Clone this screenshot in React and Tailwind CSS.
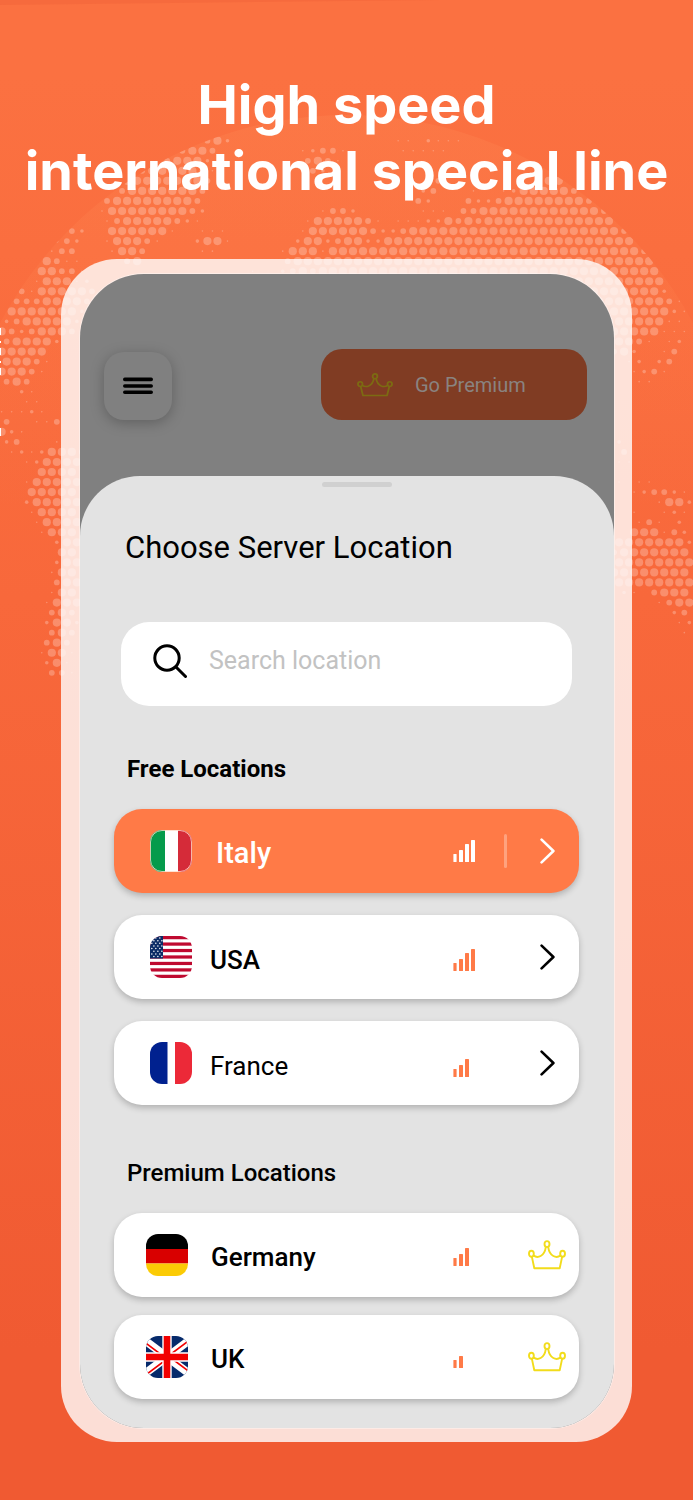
import React, { useState } from 'react';

// Halftone world map. Each row is a list of "column:sizes" runs, sizes are 1-4.
const MAP_ROWS = [
  '20:342 39:11 42:2111',
  '18:3443 30:12331 40:11111',
  '16:34442 30:3431',
  '14:34444431 30:232',
  '12:444444443 43:3 53:3442',
  '12:344444443 42:23 47:1 50:12444443',
  '10:3444444443 41:32 46:3223444444443',
  '10:14444444432 32:1332 42:111 46:334444444444443',
  '10:1344444321 30:14444431 39:1112243434444444444444',
  '7:32 11:4444441 20:111 30:144444432234444444444444444444443',
  '5:232 10:144431 19:2441 29:2442344224444444444444444444444444',
  '5:133 11:1443 20:11 28:1444144444444444444444444444444444443',
  '4:4311 12:34 28:3444444444444444444444444444444444444',
  '4:44331 25:1 28:23434444444444444444444444444444444444',
  '3:144412 56:4444444444',
  '2:31444443 57:4444444442',
  '1:33344443 58:4444444431',
  '1:44444442 60:444444421',
  '0:23444442 60:44444411',
  '0:43234443 60:444444111',
  '0:344442 61:4431 66:12',
  '0:44444 61:342 66:13',
  '0:44431 62:12 65:23',
  '0:44431 63:1231',
  '0:343 63:11',
  '2:21',
  '2:11',
  '0:11121',
  '0:3 3:113',
  '0:421',
  '0:23 5:1 61:2',
  '1:12124443 62:3',
  '2:124444 61:11',
  '4:4444',
  '2:144444 61:1 63:11',
  '3:44444 63:123321',
  '2:244444 65:1442',
  '3:14444 61:1 63:1 66:121',
  '3:14444 63:131 67:2',
  '4:1444 63:444132',
  '5:244 61:44444442',
  '6:44 61:34444444',
  '5:244 61:44444444',
  '5:144 61:44444444',
  '5:344 61:44444444',
  '5:144 62:21 65:3444',
  '4:1444 65:1344',
  '5:343 67:23',
  '4:2442 67:12',
  '5:343 68:1',
  '4:343',
  '4:1441',
  '4:241',
  '5:331',
];

const DOT_RADIUS = [0, 0.8, 1.8, 2.9, 4.1];
const PITCH = 10.04;

const dots = MAP_ROWS.flatMap((row, r) =>
  row.split(' ').flatMap(run => {
    const [start, sizes] = run.split(':');
    return [...sizes].map((size, i) => ({
      x: (r % 2 ? 1.6 : 6.6) + (Number(start) + i) * PITCH,
      y: 140.7 + r * PITCH,
      radius: DOT_RADIUS[size]
    }));
  })
);

const WorldMap = () => (
  <svg viewBox="0 0 693 720" className="absolute inset-x-0 top-0 w-full" aria-hidden="true">
    <defs>
      <clipPath id="globe">
        <circle cx="346.5" cy="507.6" r="392.6" />
      </clipPath>
      <linearGradient id="glow" x1="0" y1="0" x2="0" y2="1">
        <stop offset="0" stopColor="#ff8450" stopOpacity="0.35" />
        <stop offset="0.5" stopColor="#ff8450" stopOpacity="0" />
      </linearGradient>
    </defs>
    <path d="M0 0H440L0 5Z" fill="#f4663a" opacity="0.6" />
    <circle cx="346.5" cy="507.6" r="392.6" fill="url(#glow)" />
    <g clipPath="url(#globe)" fill="#ffffff" fillOpacity="0.25">
      {dots.map((dot, i) => (
        <circle key={i} cx={dot.x} cy={dot.y} r={dot.radius} />
      ))}
    </g>
    <path d="M0 328h1v7h-1zM0 341h1v2h-1zM0 348h1v7h-1zM0 361h1v2h-1zM0 368h1v7h-1zM0 428h1v8h-1z" fill="#ffffff" />
  </svg>
);

const CrownIcon = ({ className }) => (
  <svg viewBox="0 0 38 30" fill="none" stroke="currentColor" preserveAspectRatio="none" className={className} aria-hidden="true">
    <g strokeWidth="1.9" strokeLinejoin="round">
      <ellipse cx="19" cy="4.1" rx="2.5" ry="3" />
      <ellipse cx="3.4" cy="13.8" rx="2.4" ry="3" />
      <ellipse cx="34.6" cy="13.8" rx="2.4" ry="3" />
      <path d="M3.9 16.9L6.3 28.2H31.7L34.1 16.9M5.6 15.6C9.6 18.6 16.4 16.6 17.8 7.1M32.4 15.6C28.4 18.6 21.6 16.6 20.2 7.1" />
    </g>
  </svg>
);

const ChevronIcon = () => (
  <svg viewBox="0 0 15 26" fill="none" stroke="currentColor" strokeWidth="2.6" strokeLinecap="round" strokeLinejoin="round" className="h-[26px] w-[15px]" aria-hidden="true">
    <path d="M1.6 1.6L13.4 13L1.6 24.4" />
  </svg>
);

const SignalIcon = ({ level }) => (
  <svg viewBox="0 0 22 22" fill="currentColor" className="h-[22px] w-[22px]" aria-hidden="true">
    {[8, 12, 18, 22].slice(0, level).map((h, i) => (
      <rect key={h} x={i * 6 + (i ? 0 : 0.4)} y={22 - h} width={i ? 4 : 3.2} height={h} rx="0.6" />
    ))}
  </svg>
);

const FlagItaly = () => (
  <svg viewBox="0 0 42 42" className="h-full w-full" aria-hidden="true">
    <path d="M0 0H42V42H0Z" fill="#ffffff" />
    <path d="M0 0H15V42H0Z" fill="#059b4b" />
    <path d="M28 0H42V42H28Z" fill="#d52b39" />
    <rect x="0.5" y="0.5" width="41" height="41" rx="11.5" fill="none" stroke="#ffd9c8" strokeOpacity="0.8" />
  </svg>
);

const FlagUSA = () => (
  <svg viewBox="0 0 42 42" className="h-full w-full" aria-hidden="true">
    <path d="M0 0H42V42H0Z" fill="#ffffff" />
    {[0, 1, 2, 3, 4, 5, 6].map(i => (
      <rect key={i} x="0" y={i * 6.46} width="42" height="3.23" fill="#bf0a30" />
    ))}
    <path d="M0 0H13V22.6H0Z" fill="#0c2c66" />
    {[0, 1, 2, 3, 4, 5, 6, 7].map(r =>
      [0, 1, 2].map(c => (
        <circle key={`${r}-${c}`} cx={(r % 2 ? 3.9 : 1.8) + c * 4} cy={2 + r * 2.65} r="0.75" fill="#ffffff" />
      ))
    )}
  </svg>
);

const FlagFrance = () => (
  <svg viewBox="0 0 42 42" className="h-full w-full" aria-hidden="true">
    <path d="M0 0H42V42H0Z" fill="#ffffff" />
    <path d="M0 0H17.5V42H0Z" fill="#00218f" />
    <path d="M25 0H42V42H25Z" fill="#ec2938" />
  </svg>
);

const FlagGermany = () => (
  <svg viewBox="0 0 42 42" className="h-full w-full" aria-hidden="true">
    <path d="M0 0H42V15H0Z" fill="#000000" />
    <path d="M0 15H42V29.5H0Z" fill="#d90000" />
    <path d="M0 29.5H42V42H0Z" fill="#fbcb05" />
  </svg>
);

const FlagUK = () => (
  <svg viewBox="0 0 42 42" className="h-full w-full" aria-hidden="true">
    <path d="M0 0H42V42H0Z" fill="#062a6b" />
    <path d="M-7 0L49 42M49 0L-7 42" stroke="#ffffff" strokeWidth="8" />
    <path d="M-7 2L21 23M21 19L49 40M49 0L21 21M21 23L-7 44" stroke="#f20000" strokeWidth="1.6" />
    <path d="M21 0V42M0 21H42" stroke="#ffffff" strokeWidth="9.4" />
    <path d="M21 0V42M0 21H42" stroke="#f20000" strokeWidth="6.6" />
  </svg>
);

const freeLocations = [
  { name: 'Italy', flag: FlagItaly, level: 4 },
  { name: 'USA', flag: FlagUSA, level: 4 },
  { name: 'France', flag: FlagFrance, level: 3, light: true },
];

const premiumLocations = [
  { name: 'Germany', flag: FlagGermany, level: 3 },
  { name: 'UK', flag: FlagUK, level: 2 },
];

const FreeRow = ({ location, active, onSelect }) => {
  const Flag = location.flag;
  return (
    <li>
      <button
        type="button"
        onClick={onSelect}
        className={`flex h-[84px] w-full items-center rounded-[28px] pl-9 shadow-[0_3px_6px_rgba(0,0,0,0.22)] ${active ? 'gap-6 bg-[#ff7a47] text-white' : 'gap-[18px] bg-white text-black'}`}
      >
        <span className="h-[42px] w-[42px] shrink-0 overflow-hidden rounded-[12px]">
          <Flag />
        </span>
        <span className={`pt-[6px] ${active ? 'text-[29px]' : 'text-[26px]'} ${location.light ? 'font-normal' : 'font-medium'}`}>
          {location.name}
        </span>
        <span className="ml-auto flex items-center">
          <span className={active ? 'text-white' : 'pt-[6px] text-[#ff7a47]'}>
            <SignalIcon level={location.level} />
          </span>
          <span className="flex w-[104px] items-center justify-end pr-6">
            {active && <span className="mr-[33px] h-[34px] w-[3px] rounded-full bg-white/30" />}
            <ChevronIcon />
          </span>
        </span>
      </button>
    </li>
  );
};

const PremiumRow = ({ location }) => {
  const Flag = location.flag;
  return (
    <li>
      <button
        type="button"
        className="flex h-[84px] w-full items-center gap-[23px] rounded-[28px] bg-white pl-8 text-black shadow-[0_3px_6px_rgba(0,0,0,0.22)]"
      >
        <span className="h-[42px] w-[42px] shrink-0 overflow-hidden rounded-[12px]">
          <Flag />
        </span>
        <span className="pt-1 text-[26px] font-medium">{location.name}</span>
        <span className="ml-auto flex items-center">
          <span className="text-[#ff7a47]">
            <SignalIcon level={location.level} />
          </span>
          <span className="flex w-[104px] justify-end pr-[13px]">
            <CrownIcon className="h-[30px] w-[38px] text-[#f2dc1b]" />
          </span>
        </span>
      </button>
    </li>
  );
};

const App = () => {
  const [search, setSearch] = useState('');
  const [selected, setSelected] = useState('Italy');

  return (
    <main className="relative min-h-screen overflow-hidden bg-linear-to-b from-[#fb7141] from-5% via-[#f8683b] via-40% to-[#f05a32] to-90% pt-[72px] pb-[57px] font-['Roboto',sans-serif]">
      <WorldMap />

      <h1 className="relative text-center font-['Inter',sans-serif] text-[54px] leading-[66px] font-bold text-white">
        High speed
        <br />
        international special line
      </h1>

      <div className="relative mx-[61px] mt-[55px] rounded-[56px] bg-white/80 pt-[15px] pr-[18px] pb-[14px] pl-[19px]">
        <div className="overflow-hidden rounded-[64px] bg-[#808080] shadow-[0_0_0_1px_rgba(255,255,255,0.4)]">
          {/* Dimmed home screen behind the sheet */}
          <div className="flex items-end justify-between pt-[75px] pr-[27px] pb-14 pl-6">
            <button
              type="button"
              aria-label="Menu"
              className="flex h-[68px] w-[68px] items-center justify-center rounded-[20px] bg-[#808080] shadow-[0_3px_14px_rgba(0,0,0,0.25)]"
            >
              <svg viewBox="0 0 30 18" stroke="#000000" strokeWidth="3.6" strokeLinecap="round" className="h-[18px] w-[30px]" aria-hidden="true">
                <path d="M1.8 2.4H28.2M1.8 9H28.2M1.8 15.3H28.2" />
              </svg>
            </button>
            <button
              type="button"
              className="flex h-[71px] w-[266px] items-center gap-[22px] rounded-[21px] bg-[#803c23] pl-9 text-[20px] text-[#8a8380]"
            >
              <CrownIcon className="h-6 w-9 text-[#7c6b12]" />
              Go Premium
            </button>
          </div>

          {/* Bottom sheet */}
          <section className="rounded-t-[60px] bg-[#e3e3e3] pt-[6px] pb-[29px]">
            <div className="flex justify-center pl-5">
              <div className="h-[5px] w-[70px] rounded-full bg-[#d0d0d0]" />
            </div>
            <h2 className="mt-[41px] pl-[45px] text-[31px] leading-[40px] text-black">Choose Server Location</h2>

            <label className="mt-[54px] mr-[42px] ml-[41px] flex h-[84px] items-center gap-[22px] rounded-[28px] bg-white pb-[6px] pl-8">
              <svg viewBox="0 0 34 34" fill="none" stroke="#000000" strokeWidth="3" strokeLinecap="round" className="h-[34px] w-[34px] shrink-0" aria-label="Search">
                <circle cx="14" cy="14" r="12.2" />
                <path d="M23 23L32.5 32.5" />
              </svg>
              <input
                type="text"
                value={search}
                onChange={(e) => setSearch(e.target.value)}
                placeholder="Search location"
                className="w-full min-w-0 bg-transparent text-[25px] text-black outline-none placeholder:text-[#c2c2c2]"
              />
            </label>

            <h3 className="mt-[43px] pl-[47px] text-[24px] leading-[40px] font-bold text-black">Free Locations</h3>
            <ul className="mt-5 mr-[35px] ml-[34px] flex flex-col gap-[22px]">
              {freeLocations.map(location => (
                <FreeRow
                  key={location.name}
                  location={location}
                  active={selected === location.name}
                  onSelect={() => setSelected(location.name)}
                />
              ))}
            </ul>

            <h3 className="mt-[48px] pl-[47px] text-[24px] leading-[40px] font-medium text-black">Premium Locations</h3>
            <ul className="mt-5 mr-[35px] ml-[34px] flex flex-col gap-[18px]">
              {premiumLocations.map(location => (
                <PremiumRow key={location.name} location={location} />
              ))}
            </ul>
          </section>
        </div>
      </div>
    </main>
  );
};

export default App;
